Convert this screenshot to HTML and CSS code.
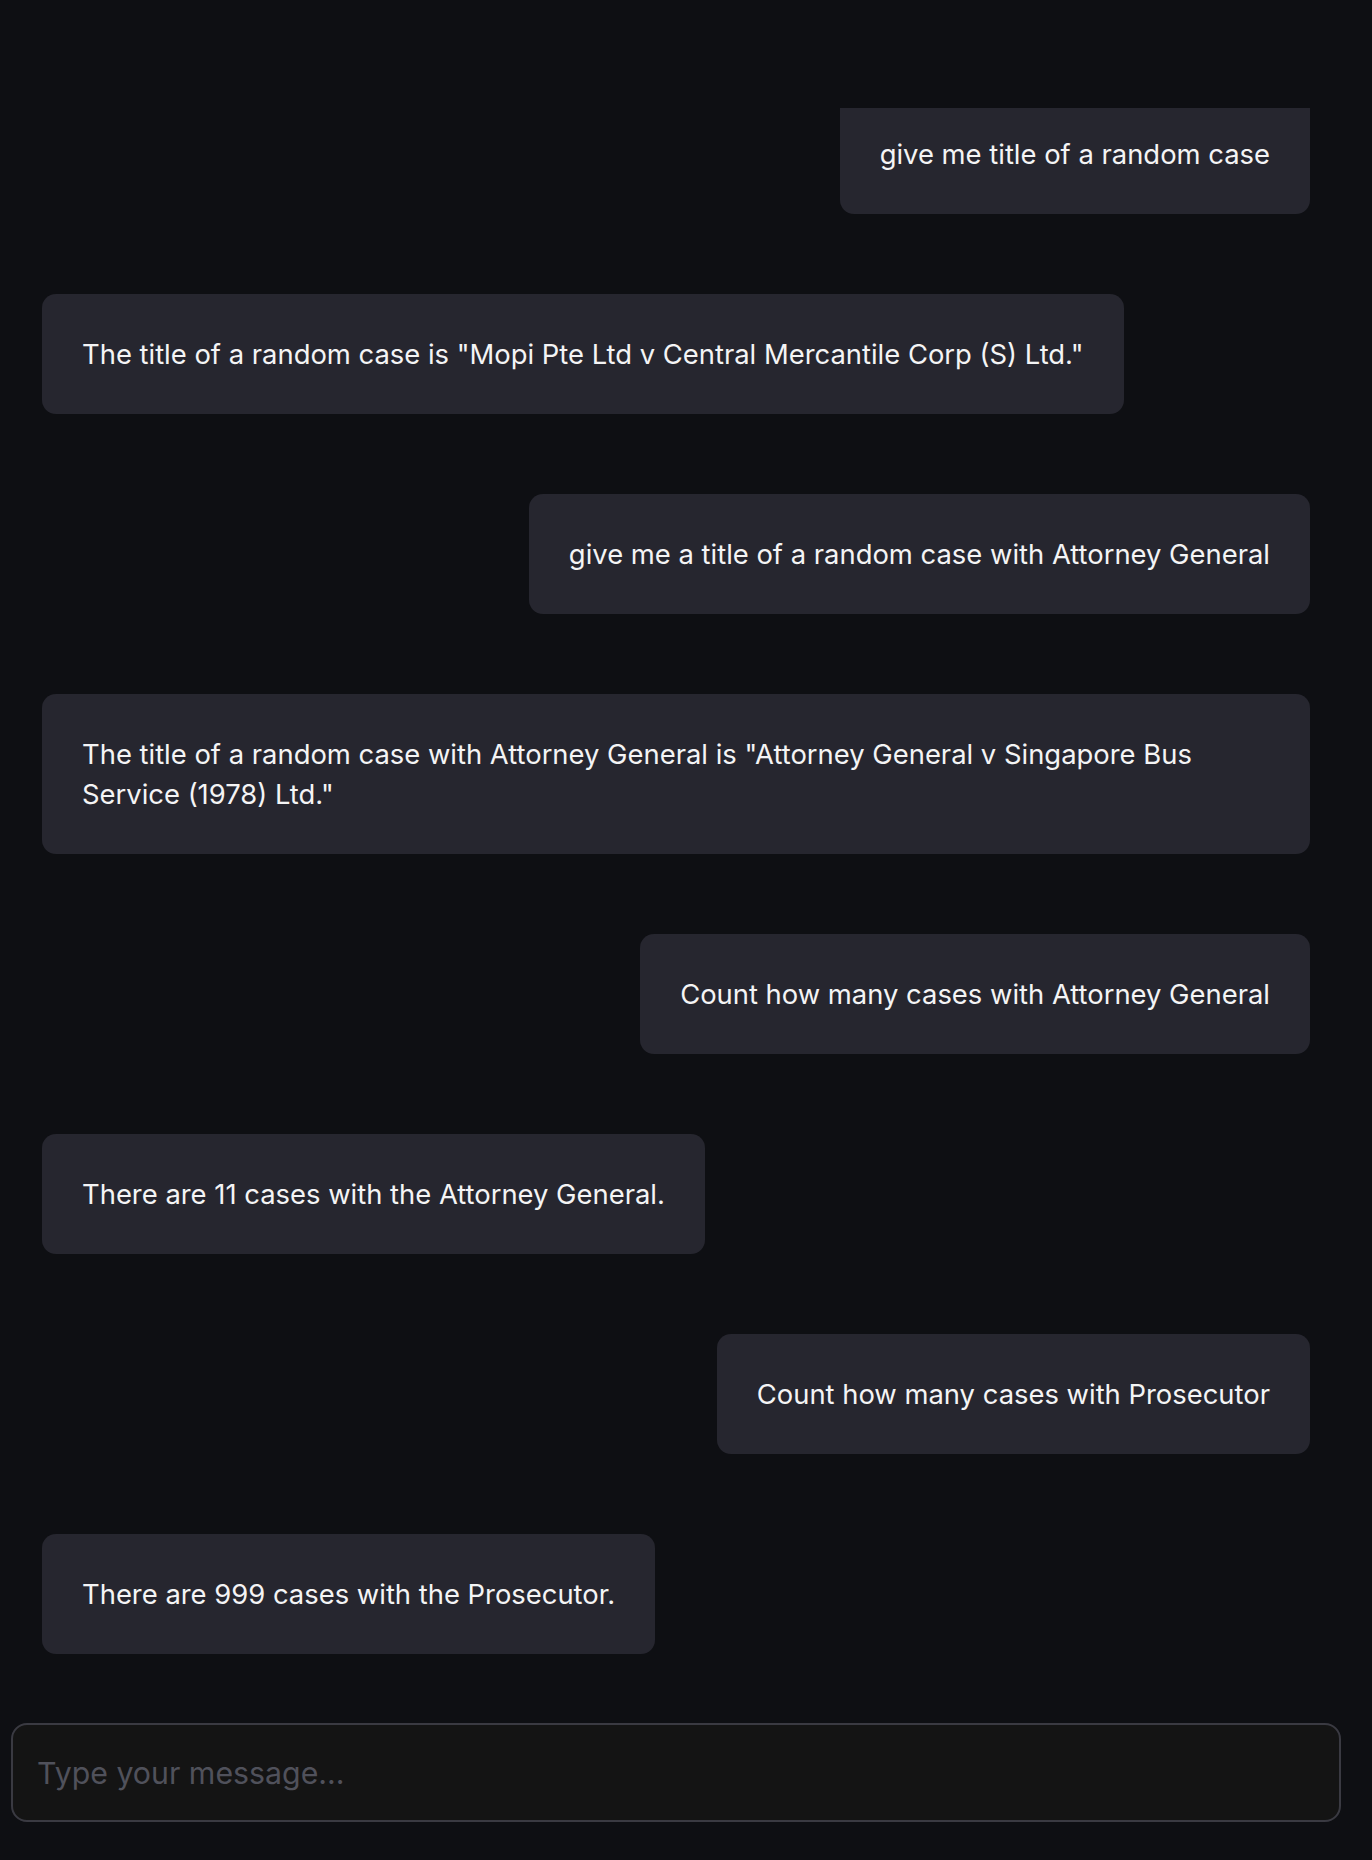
FILE: index.html
```html
<!DOCTYPE html>
<html lang="en">
<head>
<meta charset="utf-8">
<title>Chat</title>
<link rel="stylesheet" href="styles.css">
</head>
<body>
<div class="app">
  <div class="messages">
    <div class="msg user">give me title of a random case</div>
    <div class="msg bot">The title of a random case is "Mopi Pte Ltd v Central Mercantile Corp (S) Ltd."</div>
    <div class="msg user">give me a title of a random case with Attorney General</div>
    <div class="msg bot">The title of a random case with Attorney General is "Attorney General v Singapore Bus Service (1978) Ltd."</div>
    <div class="msg user">Count how many cases with Attorney General</div>
    <div class="msg bot">There are 11 cases with the Attorney General.</div>
    <div class="msg user">Count how many cases with Prosecutor</div>
    <div class="msg bot">There are 999 cases with the Prosecutor.</div>
  </div>
  <div class="composer">
    <input class="input" type="text" placeholder="Type your message...">
  </div>
</div>
</body>
</html>
```
FILE: styles.css
```css
* { box-sizing: border-box; }
html, body {
  margin: 0;
  padding: 0;
  height: 100%;
  background: #0e0f13;
}
body {
  font-family: Inter, "Noto Sans", sans-serif;
  color: #f4f4f5;
}
.app {
  height: 100vh;
  display: flex;
  flex-direction: column;
  padding-top: 108px;
}
.messages {
  flex: 1;
  min-height: 0;
  overflow: hidden;
  display: flex;
  flex-direction: column;
  justify-content: flex-end;
  gap: 80px;
  padding: 0 62px 39px 42px;
}
.msg {
  flex-shrink: 0;
  background: #26262f;
  border-radius: 14px;
  padding: 40px 40px;
  font-size: 27.4px;
  line-height: 40px;
  max-width: 100%;
}
.msg.user {
  align-self: flex-end;
}
.msg.bot {
  align-self: flex-start;
}
.composer {
  padding: 30px 31px 38px 11px;
}
.input {
  display: block;
  width: 100%;
  height: 99px;
  background: #141414;
  border: 2px solid #3a3a42;
  border-radius: 16px;
  padding: 0 24px;
  font-family: Inter, "Noto Sans", sans-serif;
  font-size: 30.3px;
  color: #f4f4f5;
  outline: none;
}
.input::placeholder {
  color: #50515b;
}
```
